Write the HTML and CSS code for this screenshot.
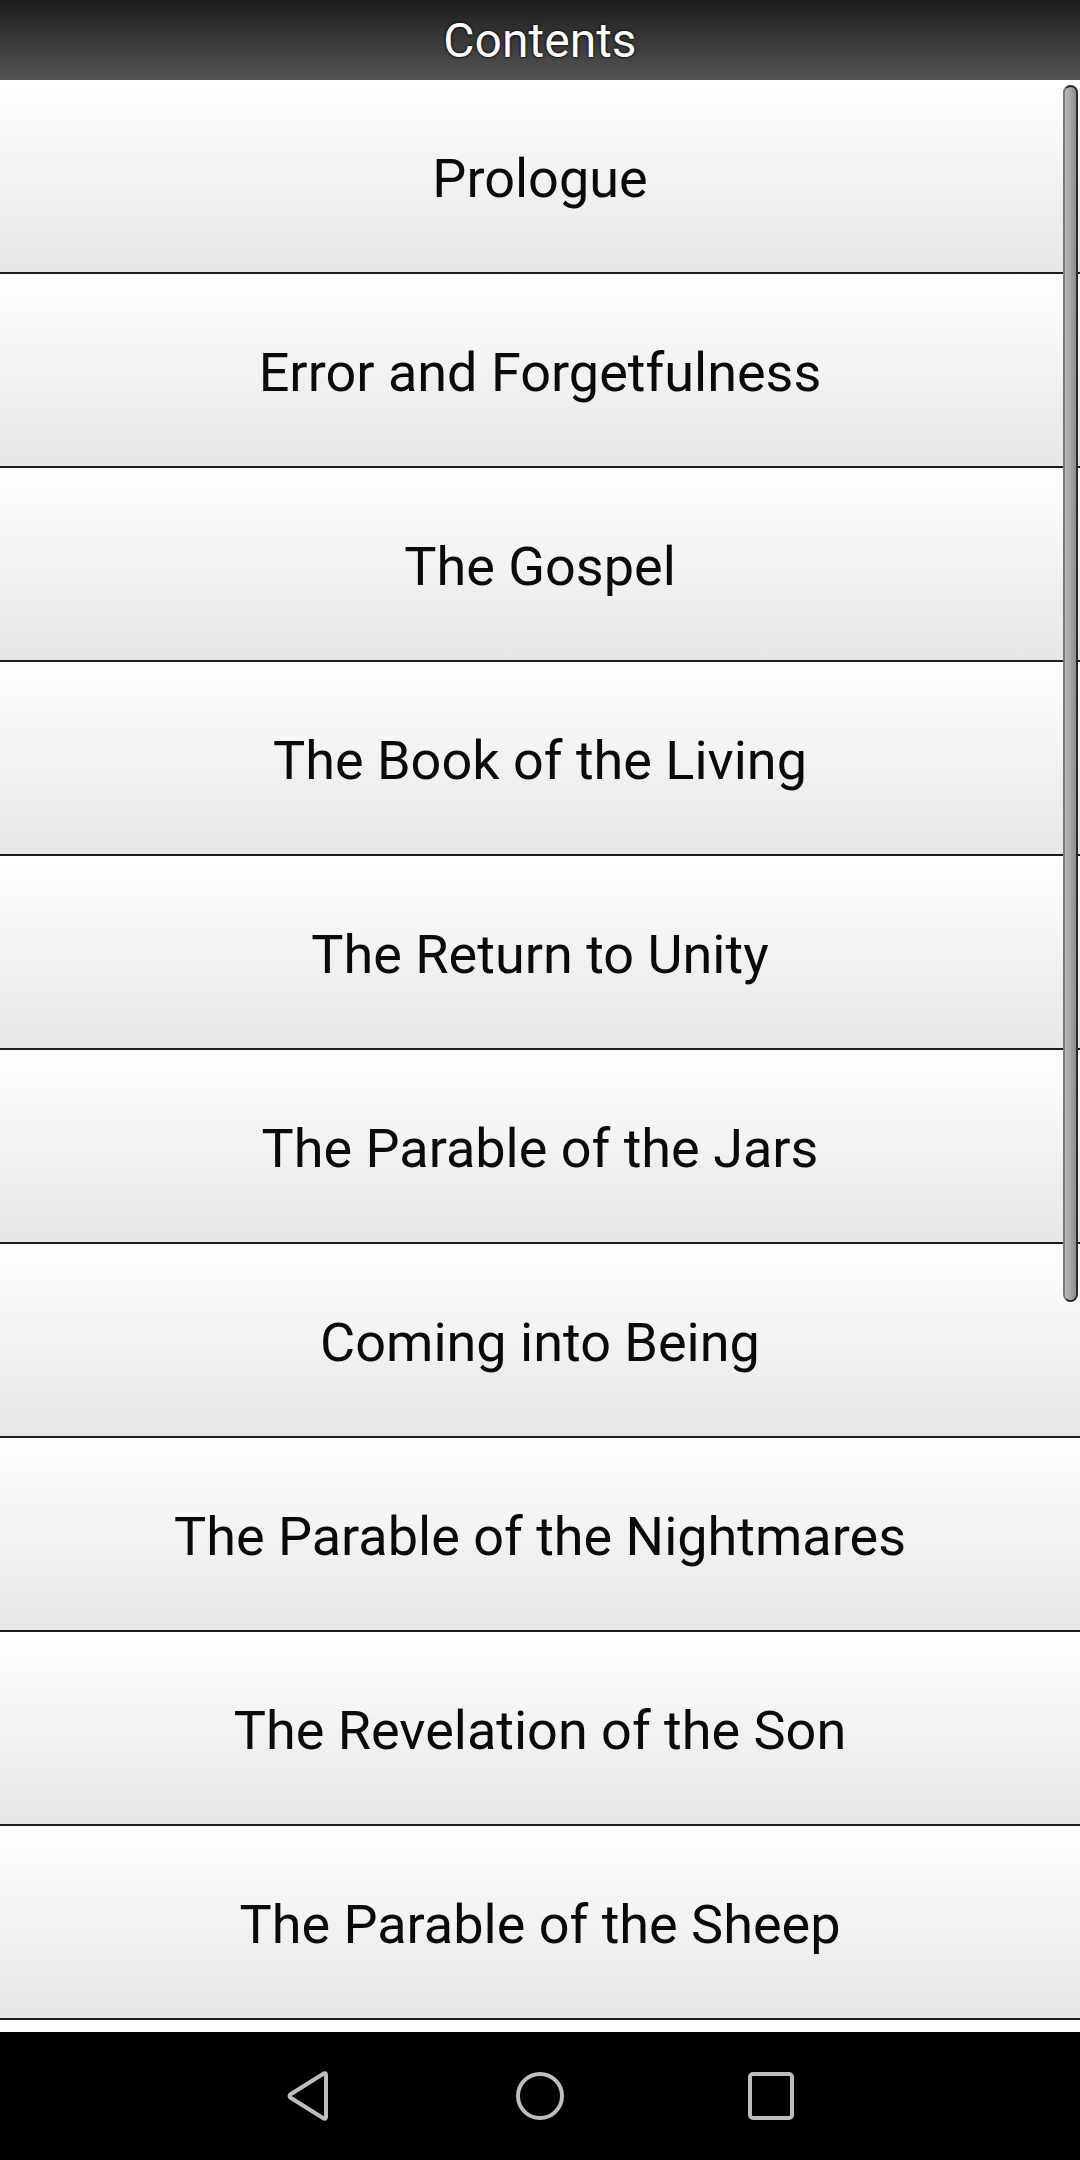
FILE: index.html
```html
<!DOCTYPE html>
<html>
<head>
<meta charset="utf-8">
<link rel="stylesheet" href="styles.css">
</head>
<body>
<div class="screen">
  <header class="topbar"><h1 class="title">Contents</h1></header>
  <main class="list">
    <div class="row">Prologue</div>
    <div class="row">Error and Forgetfulness</div>
    <div class="row">The Gospel</div>
    <div class="row">The Book of the Living</div>
    <div class="row">The Return to Unity</div>
    <div class="row">The Parable of the Jars</div>
    <div class="row">Coming into Being</div>
    <div class="row">The Parable of the Nightmares</div>
    <div class="row">The Revelation of the Son</div>
    <div class="row">The Parable of the Sheep</div>
    <div class="row row-partial"></div>
    <div class="scrollbar"></div>
  </main>
  <nav class="navbar">
    <svg class="nav-icon" width="44" height="50" viewBox="0 0 44 50">
      <path d="M40 4 L40 46 Q40 49 37 47 L5 27 Q2 25 5 23 L37 3 Q40 1 40 4 Z" fill="none" stroke="#bdbdbd" stroke-width="4" stroke-linejoin="round"/>
    </svg>
    <svg class="nav-icon" width="50" height="50" viewBox="0 0 50 50">
      <circle cx="25" cy="25" r="22" fill="none" stroke="#bdbdbd" stroke-width="4"/>
    </svg>
    <svg class="nav-icon" width="46" height="48" viewBox="0 0 46 48">
      <rect x="2" y="2" width="42" height="44" rx="3" fill="none" stroke="#bdbdbd" stroke-width="4"/>
    </svg>
  </nav>
</div>
</body>
</html>
```
FILE: styles.css
```css
* { box-sizing: border-box; }
html, body { margin: 0; padding: 0; }
body {
  width: 1080px;
  height: 2160px;
  overflow: hidden;
  font-family: Roboto, "Liberation Sans", sans-serif;
  background: #fff;
}
.screen {
  display: flex;
  flex-direction: column;
  height: 2160px;
}
.topbar {
  height: 80px;
  flex: none;
  background: linear-gradient(to bottom, #1c1c1c, #555555);
  display: flex;
  align-items: center;
  justify-content: center;
}
.title {
  margin: 0;
  color: #fff;
  font-weight: 400;
  font-size: 48px;
  line-height: 1;
  text-shadow: 0 0 3px #000, 0 0 2px #000;
  position: relative;
  top: 1px;
}
.list {
  position: relative;
  flex: 1;
  overflow: hidden;
}
.row {
  height: 194px;
  padding-top: 5px;
  border-bottom: 2px solid #1e1e1e;
  background: linear-gradient(to bottom, #ffffff, #e6e6e6);
  display: flex;
  align-items: center;
  justify-content: center;
  font-size: 54px;
  color: #0a0a0a;
}
.row-partial {
  border-bottom: none;
}
.scrollbar {
  position: absolute;
  left: 1063px;
  top: 5px;
  width: 15px;
  height: 1217px;
  border-radius: 8px;
  border: 2px solid #2a2a2a;
  border-left-color: #777;
  background: linear-gradient(to right, #bcbcbc, #8e8e8e);
}
.navbar {
  height: 128px;
  flex: none;
  background: #000;
  display: flex;
  align-items: center;
  justify-content: center;
  gap: 0;
}
.nav-icon { display: block; }
.nav-icon:nth-child(1) { margin-right: 185px; }
.nav-icon:nth-child(2) { margin-right: 183px; }
```
